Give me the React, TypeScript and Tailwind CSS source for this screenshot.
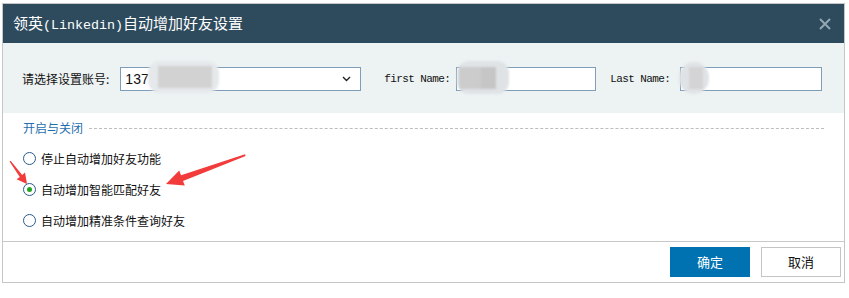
import React from "react";

const cjk = { fontFamily: '"Noto Sans CJK SC", "Noto Sans", sans-serif' };
const mono = { fontFamily: '"Liberation Mono", "DejaVu Sans Mono", monospace' };

function Radio({ checked, label }: { checked?: boolean; label: string }) {
  return (
    <div className="flex items-center h-[31px]">
      <span className="w-[13px] h-[13px] rounded-full border-[1.5px] border-[#2a5a8c] bg-white flex items-center justify-center">
        {checked && <span className="w-[5px] h-[5px] rounded-full bg-[#1fa51f]" />}
      </span>
      <span className="ml-[5px] text-[12px] text-[#111]" style={cjk}>
        {label}
      </span>
    </div>
  );
}

export default function App() {
  return (
    <div className="relative w-[849px] h-[298px] bg-white pt-[3px] pl-[2px]">
      <div className="w-[843px] h-[280px] border border-[#c6c6c6] flex flex-col bg-white">
        {/* header */}
        <div className="h-[39px] bg-[#2e4b5e] flex items-center justify-between pl-[10px] pr-[10px]">
          <div className="text-[15px] text-white leading-none" style={cjk}>
            领英<span className="text-[13.33px]" style={mono}>(Linkedin)</span>自动增加好友设置
          </div>
          <svg width="12" height="12" viewBox="0 0 12 12" className="mr-[3px]">
            <path d="M1 1L11 11M11 1L1 11" stroke="#93a8b5" strokeWidth="2" />
          </svg>
        </div>
        {/* panel */}
        <div className="h-[70px] bg-[#edf2f3] flex items-center pl-[19px] pt-[2px]">
          <span className="text-[12px] text-[#111]" style={cjk}>请选择设置账号:</span>
          <div className="relative ml-[11px] w-[241px] h-[24px] border border-[#7f9db9] bg-white flex items-center justify-between pl-[4px] pr-[9px]">
            <span className="text-[14px] text-[#111]" style={{ fontFamily: '"Liberation Sans", sans-serif' }}>137</span>
            <svg width="9" height="6" viewBox="0 0 9 6">
              <path d="M1 1L4.5 4.5L8 1" stroke="#222" strokeWidth="1.4" fill="none" />
            </svg>
            <div className="absolute left-[27px] top-[-7px] w-[71px] h-[32px] rounded-[12px] bg-[#e6e9eb] blur-[1px] flex items-center pl-[10px]">
              <div className="w-[54px] h-[22px] bg-[#d2d2d2]" />
            </div>
          </div>
          <span className="ml-[23px] text-[11px] tracking-[-0.6px] text-[#111]" style={mono}>first Name:</span>
          <div className="relative ml-[6px] w-[140px] h-[24px] border border-[#7f9db9] bg-white">
            <div className="absolute left-0 top-[-7px] w-[52px] h-[33px] rounded-[12px] bg-[#dfe3e6] blur-[1px] flex items-center pl-[2px]">
              <div className="w-[22px] h-[22px] bg-[#cccccc]" />
              <div className="w-[15px] h-[22px] bg-[#c6c6c6]" />
            </div>
          </div>
          <span className="ml-[14px] text-[11px] tracking-[-0.6px] text-[#111]" style={mono}>Last Name:</span>
          <div className="relative ml-[10px] w-[142px] h-[24px] border border-[#7f9db9] bg-white">
            <div className="absolute left-[-2px] top-[-6px] w-[30px] h-[32px] rounded-full bg-[#e0e3e6] blur-[1px] flex items-center pl-[10px]">
              <div className="w-[14px] h-[22px] bg-[#d4d4d4]" />
            </div>
          </div>
        </div>
        {/* body */}
        <div className="flex-1 pl-[20px] pr-[20px] pt-[7px]">
          <div className="flex items-center h-[16px]">
            <span className="text-[12px] text-[#1f6fae]" style={cjk}>开启与关闭</span>
            <div className="flex-1 ml-[6px] border-t border-dashed border-[#bdbdbd]" />
          </div>
          <div className="mt-[7px]">
            <Radio label="停止自动增加好友功能" />
            <Radio checked label="自动增加智能匹配好友" />
            <Radio label="自动增加精准条件查询好友" />
          </div>
        </div>
        {/* footer */}
        <div className="h-[41px] border-t border-[#c8c8c8] flex items-center justify-end gap-[11px] pr-[3px]">
          <button className="w-[80px] h-[30px] bg-[#0072b1] text-white text-[13px]" style={cjk}>确定</button>
          <button className="w-[80px] h-[30px] bg-white border border-[#c4c4c4] text-[#111] text-[13px]" style={cjk}>取消</button>
        </div>
      </div>
      <svg className="absolute left-0 top-0 pointer-events-none" width="849" height="298" viewBox="0 0 849 298">
        <polygon
          points="166,184 179.2,170.6 181,175.3 245,154.3 245.6,156 183,180.9 184.8,185.6"
          fill="#f23b3b"
        />
        <polygon
          points="27,184 25,172.5 22.2,175.1 10.6,160.7 9.6,161.5 19.8,176.9 16.6,179.3"
          fill="#f23b3b"
        />
      </svg>
    </div>
  );
}
